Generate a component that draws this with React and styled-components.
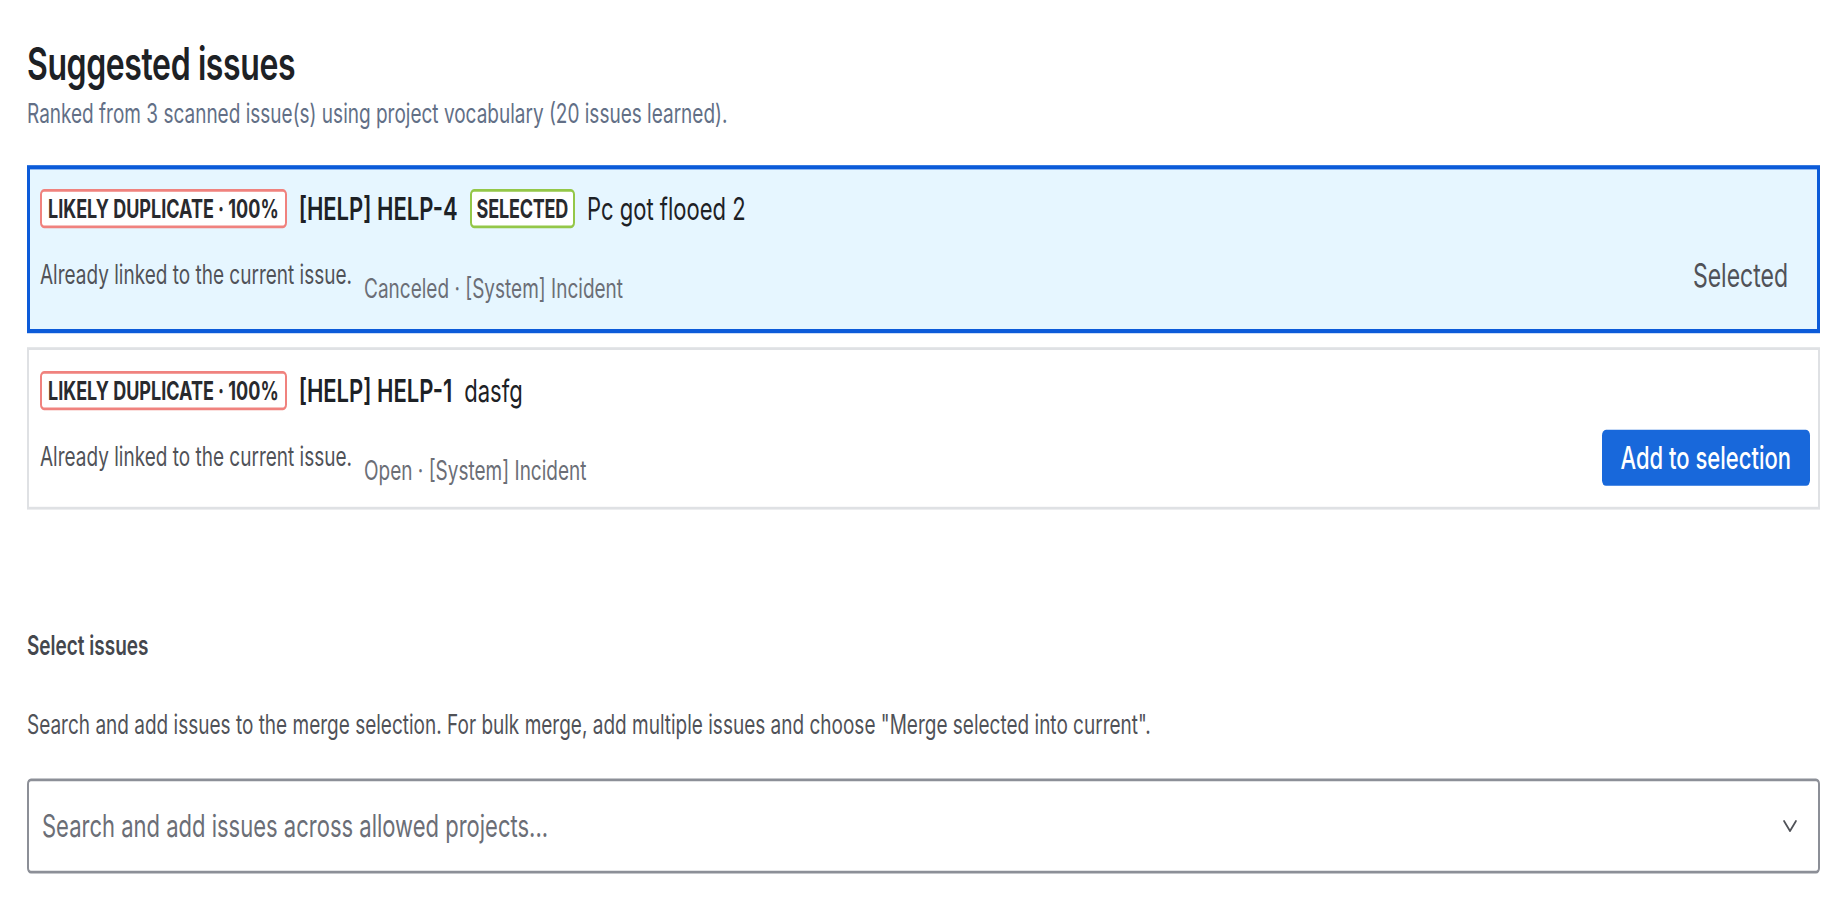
import React from 'react';
import styled, { createGlobalStyle } from 'styled-components';

// the reference is stretched vertically; the page is laid out at natural size
// and stretched once at the root
const STRETCH = 1.4;

const GlobalStyle = createGlobalStyle`
  html, body {
    margin: 0;
    padding: 0;
    background: #ffffff;
  }
  body {
    font-family: Inter, "Noto Sans", "Liberation Sans", sans-serif;
    color: #1d2125;
  }
`;

const Viewport = styled.div`
  width: 1840px;
  height: 900px;
  overflow: hidden;
`;

const Stretch = styled.div`
  width: 1840px;
  transform: scaleY(${STRETCH});
  transform-origin: top left;
`;

const Page = styled.div`
  padding: 27px 20px 0 27px;
  display: flex;
  flex-direction: column;
`;

const Title = styled.h1`
  margin: 0;
  font-size: 32px;
  font-weight: 600;
  line-height: 38px;
  color: #1d2125;
  letter-spacing: -0.4px;
`;

const Subtitle = styled.p`
  margin: 5px 0 24px;
  font-size: 19px;
  line-height: 24px;
  color: #626f86;
`;

const List = styled.div`
  display: flex;
  flex-direction: column;
  gap: 10px;
`;

const Card = styled.div`
  display: flex;
  flex-direction: column;
  gap: 22px;
  padding: ${p => (p.$selected ? '14px 29px 16px 10px' : '15px 8px 13px 11px')};
  background: ${p => (p.$selected ? '#e6f6ff' : '#ffffff')};
  border: ${p => (p.$selected ? '3px solid #0c5bd9' : '2px solid #dfe1e4')};
`;

const TitleRow = styled.div`
  display: flex;
  align-items: center;
  gap: 12px;
`;

const Lozenge = styled.span`
  display: inline-flex;
  align-items: center;
  box-sizing: border-box;
  height: 28px;
  padding: 0 ${p => (p.$wide ? '6px' : '5px')};
  border: 2px solid ${p => p.$color};
  border-radius: 4px;
  font-size: 18px;
  font-weight: 700;
  text-transform: uppercase;
  letter-spacing: ${p => (p.$wide ? '0' : '-0.2px')};
  color: #292a2e;
  background: #ffffff;
`;

const IssueKey = styled.span`
  font-size: 22px;
  font-weight: 600;
  color: #1d2125;
`;

const IssueSummary = styled.span`
  font-size: 22px;
  color: #1d2125;
`;

const BottomRow = styled.div`
  display: flex;
  align-items: flex-start;
  justify-content: space-between;
`;

const MetaGroup = styled.div`
  display: flex;
  align-items: flex-start;
  gap: 12px;
`;

const Note = styled.span`
  font-size: 19px;
  line-height: 24px;
  color: #505258;
`;

const Meta = styled.span`
  margin-top: 10px;
  font-size: 19px;
  line-height: 24px;
  color: #6b6e76;
`;

const SelectedText = styled.span`
  font-size: 23px;
  line-height: 24px;
  color: #505258;
`;

const AddButton = styled.button`
  margin-top: -8px;
  height: 40px;
  padding: 0 19px;
  border: none;
  border-radius: 4px;
  background: #1868db;
  color: #ffffff;
  font-family: inherit;
  font-size: 22px;
  font-weight: 500;
  cursor: pointer;
`;

const Section = styled.div`
  margin-top: 86px;
  display: flex;
  flex-direction: column;
`;

const Label = styled.label`
  font-size: 19px;
  font-weight: 600;
  color: #44474d;
  line-height: 24px;
`;

const Help = styled.p`
  margin: 32px 0 0;
  font-size: 19px;
  color: #505258;
  line-height: 24px;
`;

const SelectBox = styled.div`
  margin-top: 26px;
  height: 68px;
  display: flex;
  align-items: center;
  justify-content: space-between;
  padding: 0 20px 0 13px;
  border: 2px solid #8c8f97;
  border-radius: 4px;
  box-sizing: border-box;
`;

const Placeholder = styled.span`
  font-size: 22px;
  color: #6b6e76;
`;

const Chevron = () => (
  <svg width="16" height="10" viewBox="0 0 16 10" fill="none">
    <path d="M2 1.5l6 7 6-7" stroke="#505258" strokeWidth="1.6" strokeLinecap="round" strokeLinejoin="round" />
  </svg>
);

const issues = [
  { key: '[HELP] HELP-4', summary: 'Pc got flooed 2', status: 'Canceled', selected: true },
  { key: '[HELP] HELP-1', summary: 'dasfg', status: 'Open', selected: false },
];

const App = () => (
  <>
    <GlobalStyle />
    <Viewport>
      <Stretch>
        <Page>
          <Title>Suggested issues</Title>
          <Subtitle>Ranked from 3 scanned issue(s) using project vocabulary (20 issues learned).</Subtitle>
          <List>
            {issues.map(issue => (
              <Card key={issue.key} $selected={issue.selected}>
                <TitleRow>
                  <Lozenge $wide $color="#f0827e">Likely duplicate · 100%</Lozenge>
                  <IssueKey>{issue.key}</IssueKey>
                  {issue.selected && <Lozenge $color="#94c748">Selected</Lozenge>}
                  <IssueSummary>{issue.summary}</IssueSummary>
                </TitleRow>
                <BottomRow>
                  <MetaGroup>
                    <Note>Already linked to the current issue.</Note>
                    <Meta>{issue.status} · [System] Incident</Meta>
                  </MetaGroup>
                  {issue.selected ? (
                    <SelectedText>Selected</SelectedText>
                  ) : (
                    <AddButton>Add to selection</AddButton>
                  )}
                </BottomRow>
              </Card>
            ))}
          </List>
          <Section>
            <Label>Select issues</Label>
            <Help>
              Search and add issues to the merge selection. For bulk merge, add multiple issues and choose "Merge
              selected into current".
            </Help>
            <SelectBox>
              <Placeholder>Search and add issues across allowed projects...</Placeholder>
              <Chevron />
            </SelectBox>
          </Section>
        </Page>
      </Stretch>
    </Viewport>
  </>
);

export default App;
